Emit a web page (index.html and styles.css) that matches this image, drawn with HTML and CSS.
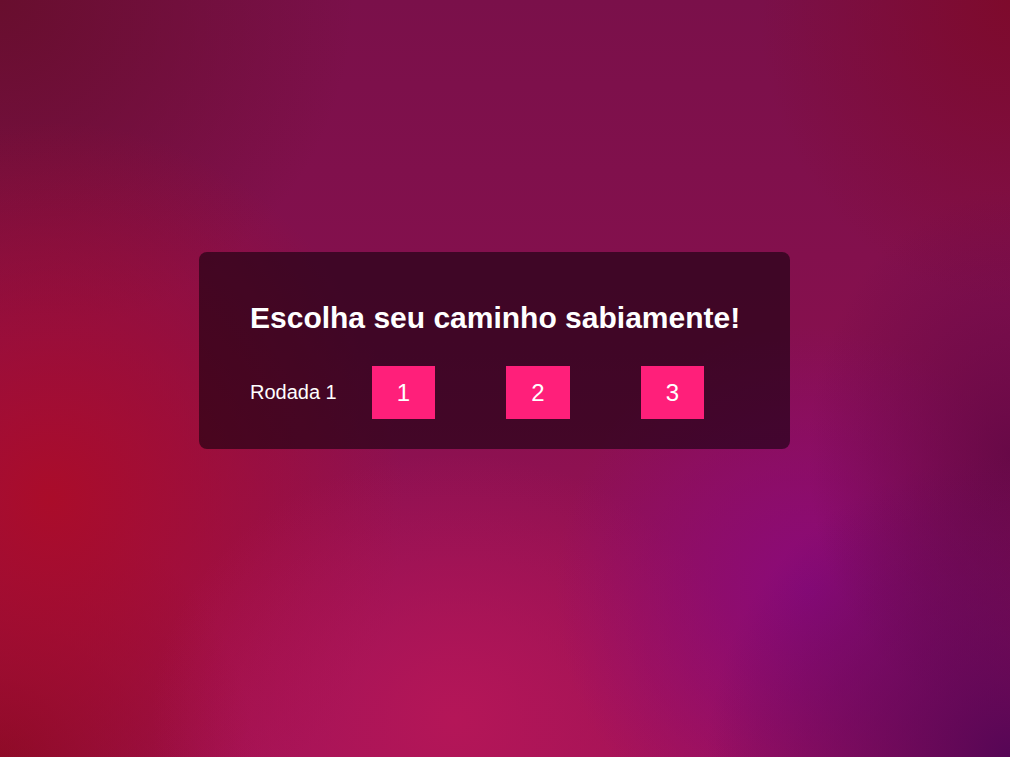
FILE: index.html
```html
<!DOCTYPE html>
<html lang="pt">
<head>
<meta charset="utf-8">
<title>Escolha seu caminho</title>
<link rel="stylesheet" href="styles.css">
</head>
<body>
<main class="stage">
  <section class="card">
    <h1 class="title">Escolha seu caminho sabiamente!</h1>
    <div class="round">
      <span class="round-label">Rodada 1</span>
      <button class="choice">1</button>
      <button class="choice">2</button>
      <button class="choice">3</button>
    </div>
  </section>
</main>
</body>
</html>
```
FILE: styles.css
```css
html, body {
  margin: 0;
  height: 100%;
}
body {
  font-family: "Liberation Sans", Arial, sans-serif;
  color: #fff;
  background-color: #80104a;
  background-image:
    radial-gradient(ellipse 30% 40% at 100% 100%, rgba(86,6,86,1), rgba(86,6,86,0)),
    radial-gradient(ellipse 20% 35% at 100% 60%, rgba(100,8,70,0.9), rgba(100,8,70,0)),
    radial-gradient(ellipse 25% 35% at 80% 78%, rgba(138,10,122,1), rgba(138,10,122,0)),
    radial-gradient(ellipse 30% 35% at 45% 95%, rgba(180,22,88,1), rgba(180,22,88,0)),
    radial-gradient(ellipse 35% 50% at 5% 66%, rgba(170,12,42,1), rgba(170,12,42,0)),
    radial-gradient(ellipse 25% 35% at 0% 100%, rgba(130,10,38,1), rgba(130,10,38,0)),
    radial-gradient(ellipse 35% 45% at 0% 0%, rgba(104,14,46,1), rgba(104,14,46,0)),
    radial-gradient(ellipse 25% 40% at 100% 0%, rgba(126,10,44,1), rgba(126,10,44,0)),
    linear-gradient(180deg, #7a104a 0%, #86104e 45%, #a01258 100%);
}
.stage {
  padding: 252px 0 0 199px;
  display: flex;
  align-items: flex-start;
}
.card {
  padding: 48px 50px 30px 51px;
  background: rgba(14, 0, 10, 0.58);
  border-radius: 8px;
}
.title {
  margin: 0;
  font-size: 30px;
  line-height: 36px;
  font-weight: bold;
  white-space: nowrap;
}
.round {
  margin-top: 30px;
  display: flex;
  align-items: center;
}
.round-label {
  font-size: 20px;
  white-space: nowrap;
  flex-shrink: 0;
  margin-right: 35px;
}
.choice {
  flex-shrink: 0;
  width: 63.5px;
  height: 53px;
  border: none;
  border-radius: 0;
  background: #ff1f7a;
  color: #fff;
  font-family: "Liberation Sans", Arial, sans-serif;
  font-size: 24px;
  padding: 0;
  margin-right: 71px;
}
.choice:last-child {
  margin-right: 0;
}
```
